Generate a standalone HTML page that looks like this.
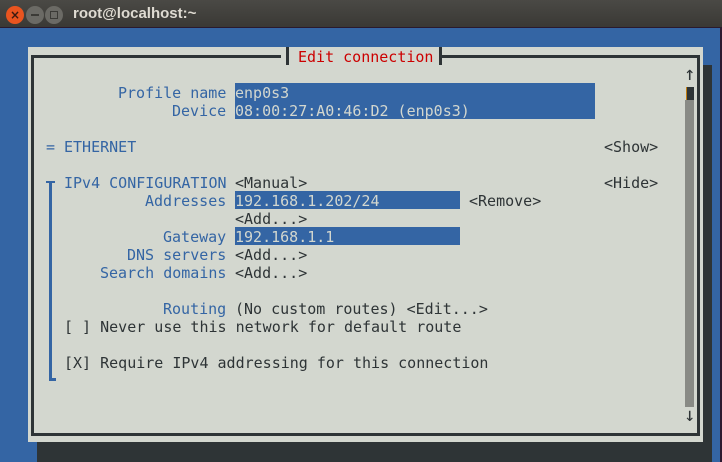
<!DOCTYPE html>
<html><head><meta charset="utf-8"><style>
*{margin:0;padding:0;box-sizing:border-box}
body{width:722px;height:462px;overflow:hidden;background:#3465a4;position:relative;font-family:"DejaVu Sans Mono","Liberation Mono",monospace;font-size:15px;line-height:18px}
.abs{position:absolute}
.t{position:absolute;white-space:pre;height:18px;margin-top:1px}
.b{color:#3465a4}.d{color:#2e3436}.r{color:#cc0000}
.f{background:#3465a4;color:#d3d7cf;margin-top:0;line-height:20px}
</style></head><body>
<div class="abs" style="left:0;top:0;width:722px;height:28px;background:linear-gradient(#4a4945,#3a3935);border-bottom:1px solid #2a1a2e"></div>
<div class="abs" style="left:6px;top:6px;width:18px;height:18px;border-radius:50%;background:#e9541f;color:#3a1a10;font:bold 12px/18px 'DejaVu Sans',sans-serif;text-align:center">×</div>
<div class="abs" style="left:26px;top:6px;width:18px;height:18px;border-radius:50%;background:#6b6a65"><div class="abs" style="left:5px;top:8px;width:8px;height:2px;background:#3b3a36"></div></div>
<div class="abs" style="left:45px;top:6px;width:18px;height:18px;border-radius:50%;background:#6b6a65"><div class="abs" style="left:5px;top:5px;width:8px;height:8px;border:1.5px solid #3b3a36"></div></div>
<div class="abs" style="left:73px;top:4px;color:#dfdbd2;font:bold 15px/20px 'Liberation Sans','DejaVu Sans',sans-serif">root@localhost:~</div>
<div class="abs" style="left:720px;top:28px;width:2px;height:434px;background:#2c1a30"></div>
<div class="abs" style="left:703px;top:65px;width:9px;height:397px;background:#2e3436"></div>
<div class="abs" style="left:37px;top:442px;width:675px;height:20px;background:#2e3436"></div>
<div class="abs" style="left:28px;top:47px;width:675px;height:395px;background:#d3d7cf"></div>
<div class="abs" style="left:31px;top:55px;width:669px;height:381px;border:3px solid #2e3436"></div>
<div class="abs" style="left:281px;top:47px;width:159px;height:18px;background:#d3d7cf"></div>
<div class="abs" style="left:286px;top:47px;width:3px;height:18px;background:#2e3436"></div>
<div class="abs" style="left:439px;top:47px;width:3px;height:18px;background:#2e3436"></div>
<div class="t r" style="left:298px;top:47px">Edit connection</div>
<div class="t d" style="left:684px;top:64px;font-size:19px">↑</div>
<div class="abs" style="left:686px;top:87px;width:8px;height:13px;background:#2e3436;border-left:1px solid #c17d11"></div>
<div class="abs" style="left:685px;top:100px;width:9px;height:307px;background:#888a85"></div>
<div class="t d" style="left:684px;top:405px;font-size:19px">↓</div>
<div class="t b" style="left:118px;top:83px">Profile name</div>
<div class="t f" style="left:235px;top:83px;width:360px">enp0s3</div>
<div class="t b" style="left:172px;top:101px">Device</div>
<div class="t f" style="left:235px;top:101px;width:360px">08:00:27:A0:46:D2 (enp0s3)</div>
<div class="t b" style="left:46px;top:137px">=</div>
<div class="t b" style="left:64px;top:137px">ETHERNET</div>
<div class="t d" style="left:604px;top:137px">&lt;Show&gt;</div>
<div class="abs" style="left:46px;top:181px;width:9px;height:2px;background:#3465a4"></div>
<div class="abs" style="left:49px;top:181px;width:3px;height:200px;background:#3465a4"></div>
<div class="abs" style="left:49px;top:378px;width:7px;height:3px;background:#3465a4"></div>
<div class="t b" style="left:64px;top:173px">IPv4 CONFIGURATION</div>
<div class="t d" style="left:235px;top:173px">&lt;Manual&gt;</div>
<div class="t d" style="left:604px;top:173px">&lt;Hide&gt;</div>
<div class="t b" style="left:145px;top:191px">Addresses</div>
<div class="t f" style="left:235px;top:191px;width:225px">192.168.1.202/24</div>
<div class="t d" style="left:469px;top:191px">&lt;Remove&gt;</div>
<div class="t d" style="left:235px;top:209px">&lt;Add...&gt;</div>
<div class="t b" style="left:163px;top:227px">Gateway</div>
<div class="t f" style="left:235px;top:227px;width:225px">192.168.1.1</div>
<div class="t b" style="left:127px;top:245px">DNS servers</div>
<div class="t d" style="left:235px;top:245px">&lt;Add...&gt;</div>
<div class="t b" style="left:100px;top:263px">Search domains</div>
<div class="t d" style="left:235px;top:263px">&lt;Add...&gt;</div>
<div class="t b" style="left:163px;top:299px">Routing</div>
<div class="t d" style="left:235px;top:299px">(No custom routes) &lt;Edit...&gt;</div>
<div class="t d" style="left:64px;top:317px">[ ] Never use this network for default route</div>
<div class="t d" style="left:64px;top:353px">[X] Require IPv4 addressing for this connection</div>
</body></html>
